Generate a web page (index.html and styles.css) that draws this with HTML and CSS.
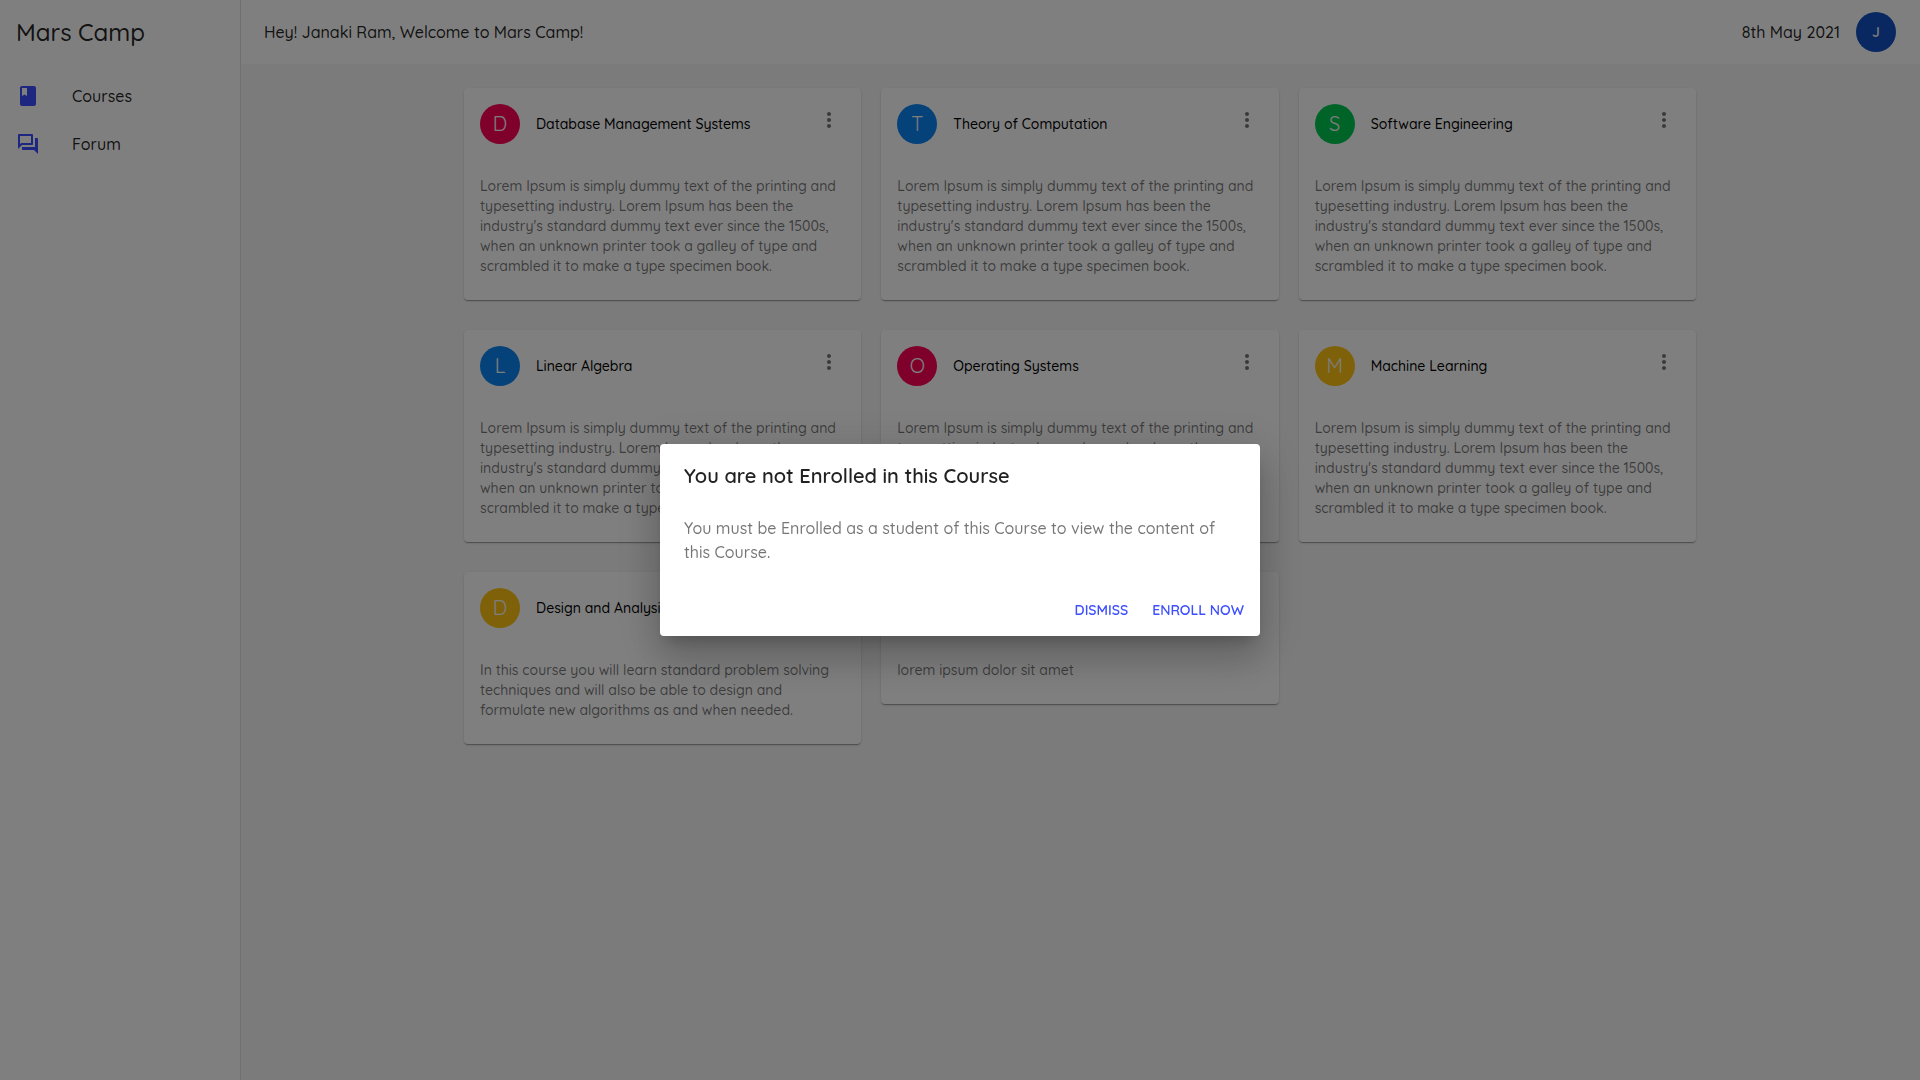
FILE: index.html
```html
<!DOCTYPE html>
<html lang="en">
<head>
<meta charset="utf-8">
<meta name="viewport" content="width=device-width, initial-scale=1">
<title>Mars Camp</title>
<link rel="stylesheet" href="styles.css">
</head>
<body>
<svg class="sprite" aria-hidden="true">
  <symbol id="icon-more" viewBox="0 0 24 24"><path d="M12 8c1.1 0 2-.9 2-2s-.9-2-2-2-2 .9-2 2 .9 2 2 2zm0 2c-1.1 0-2 .9-2 2s.9 2 2 2 2-.9 2-2-.9-2-2-2zm0 6c-1.1 0-2 .9-2 2s.9 2 2 2 2-.9 2-2-.9-2-2-2z"/></symbol>
</svg>

<div class="app">
  <aside class="sidebar">
    <h1 class="brand">Mars Camp</h1>
    <nav class="nav">
      <a class="nav-item" href="#courses">
        <svg class="nav-icon" viewBox="0 0 24 24" aria-hidden="true"><path d="M18 2H6c-1.100 0-2 .9-2 2v16c0 1.100.9 2 2 2h12c1.100 0 2-.9 2-2V4c0-1.100-.9-2-2-2zM6 4h5v8l-2.500-1.500L6 12V4z"/></svg>
        <span>Courses</span>
      </a>
      <a class="nav-item" href="#forum">
        <svg class="nav-icon" viewBox="0 0 24 24" aria-hidden="true"><path d="M15 4v7H5.170L4 12.170V4h11m1-2H3c-.55 0-1 .45-1 1v14l4-4h10c.55 0 1-.45 1-1V3c0-.55-.45-1-1-1zm5 4h-2v9H6v2c0 .55.45 1 1 1h11l4 4V7c0-.55-.45-1-1-1z"/></svg>
        <span>Forum</span>
      </a>
    </nav>
  </aside>

  <div class="page">
    <header class="topbar">
      <p class="greeting">Hey! Janaki Ram, Welcome to Mars Camp!</p>
      <time class="date" datetime="2021-05-08">8th May 2021</time>
      <span class="avatar avatar-user">J</span>
    </header>

    <main class="courses" id="courses">
      <article class="card">
        <header class="card-head">
          <span class="avatar pink">D</span>
          <h2 class="card-title">Database Management Systems</h2>
          <button class="icon-button" type="button" aria-label="Course options"><svg viewBox="0 0 24 24"><use href="#icon-more"/></svg></button>
        </header>
        <p class="card-text">Lorem Ipsum is simply dummy text of the printing and typesetting industry. Lorem Ipsum has been the industry's standard dummy text ever since the 1500s, when an unknown printer took a galley of type and scrambled it to make a type specimen book.</p>
      </article>
      <article class="card">
        <header class="card-head">
          <span class="avatar blue">T</span>
          <h2 class="card-title">Theory of Computation</h2>
          <button class="icon-button" type="button" aria-label="Course options"><svg viewBox="0 0 24 24"><use href="#icon-more"/></svg></button>
        </header>
        <p class="card-text">Lorem Ipsum is simply dummy text of the printing and typesetting industry. Lorem Ipsum has been the industry's standard dummy text ever since the 1500s, when an unknown printer took a galley of type and scrambled it to make a type specimen book.</p>
      </article>
      <article class="card">
        <header class="card-head">
          <span class="avatar green">S</span>
          <h2 class="card-title">Software Engineering</h2>
          <button class="icon-button" type="button" aria-label="Course options"><svg viewBox="0 0 24 24"><use href="#icon-more"/></svg></button>
        </header>
        <p class="card-text">Lorem Ipsum is simply dummy text of the printing and typesetting industry. Lorem Ipsum has been the industry's standard dummy text ever since the 1500s, when an unknown printer took a galley of type and scrambled it to make a type specimen book.</p>
      </article>
      <article class="card">
        <header class="card-head">
          <span class="avatar blue">L</span>
          <h2 class="card-title">Linear Algebra</h2>
          <button class="icon-button" type="button" aria-label="Course options"><svg viewBox="0 0 24 24"><use href="#icon-more"/></svg></button>
        </header>
        <p class="card-text">Lorem Ipsum is simply dummy text of the printing and typesetting industry. Lorem Ipsum has been the industry's standard dummy text ever since the 1500s, when an unknown printer took a galley of type and scrambled it to make a type specimen book.</p>
      </article>
      <article class="card">
        <header class="card-head">
          <span class="avatar pink">O</span>
          <h2 class="card-title">Operating Systems</h2>
          <button class="icon-button" type="button" aria-label="Course options"><svg viewBox="0 0 24 24"><use href="#icon-more"/></svg></button>
        </header>
        <p class="card-text">Lorem Ipsum is simply dummy text of the printing and typesetting industry. Lorem Ipsum has been the industry's standard dummy text ever since the 1500s, when an unknown printer took a galley of type and scrambled it to make a type specimen book.</p>
      </article>
      <article class="card">
        <header class="card-head">
          <span class="avatar yellow">M</span>
          <h2 class="card-title">Machine Learning</h2>
          <button class="icon-button" type="button" aria-label="Course options"><svg viewBox="0 0 24 24"><use href="#icon-more"/></svg></button>
        </header>
        <p class="card-text">Lorem Ipsum is simply dummy text of the printing and typesetting industry. Lorem Ipsum has been the industry's standard dummy text ever since the 1500s, when an unknown printer took a galley of type and scrambled it to make a type specimen book.</p>
      </article>
      <article class="card">
        <header class="card-head">
          <span class="avatar yellow">D</span>
          <h2 class="card-title">Design and Analysis</h2>
          <button class="icon-button" type="button" aria-label="Course options"><svg viewBox="0 0 24 24"><use href="#icon-more"/></svg></button>
        </header>
        <p class="card-text">In this course you will learn standard problem solving techniques and will also be able to design and formulate new algorithms as and when needed.</p>
      </article>
      <article class="card">
        <header class="card-head"></header>
        <p class="card-text">lorem ipsum dolor sit amet</p>
      </article>
    </main>
  </div>
</div>

<div class="backdrop">
  <section class="dialog" role="dialog" aria-modal="true" aria-labelledby="dialog-title">
    <h2 class="dialog-title" id="dialog-title">You are not Enrolled in this Course</h2>
    <p class="dialog-text">You must be Enrolled as a student of this Course to view the content of this Course.</p>
    <div class="dialog-actions">
      <button class="text-button" type="button">DISMISS</button>
      <button class="text-button" type="button">ENROLL NOW</button>
    </div>
  </section>
</div>
</body>
</html>
```
FILE: styles.css
```css
* {
  box-sizing: border-box;
}

body {
  margin: 0;
  background: #f7f7f7;
  color: rgba(0, 0, 0, 0.87);
  font-family: Quicksand, "Open Sans", sans-serif;
  font-size: 16px;
  font-weight: 500;
  line-height: 24px;
}

h1, h2, p {
  margin: 0;
  font-weight: 500;
}

button {
  border: 0;
  background: none;
  font-family: inherit;
  cursor: pointer;
}

.sprite {
  display: none;
}

.app {
  display: grid;
  grid-template-columns: 240px 1fr;
  min-height: 100vh;
}

/* Sidebar: its right border lies over the page's edge */
.sidebar {
  z-index: 1;
  width: 241px;
  background: #fff;
  border-right: 1px solid rgba(0, 0, 0, 0.12);
}

.brand {
  padding: 16px;
  font-size: 24px;
  line-height: 32px;
}

.nav {
  padding: 8px 0;
}

.nav-item {
  display: flex;
  align-items: center;
  gap: 32px;
  height: 48px;
  padding: 0 16px;
  color: inherit;
  text-decoration: none;
}

.nav-icon {
  width: 24px;
  height: 24px;
  fill: #3d4fff;
}

/* Top bar */
.topbar {
  display: flex;
  align-items: center;
  gap: 16px;
  height: 64px;
  padding: 0 24px;
  background: #fff;
}

.greeting {
  flex: 1;
}

.avatar {
  display: flex;
  align-items: center;
  justify-content: center;
  flex: none;
  width: 40px;
  height: 40px;
  border-radius: 50%;
  color: #fafafa;
  font-size: 20px;
  font-weight: 400;
}

.avatar-user {
  background: #1250c4;
  font-size: 14px;
  font-weight: 600;
}

.pink { background: #ff0055; }
.blue { background: #0984f3; }
.green { background: #00c853; }
.yellow { background: #ffc312; }

/* Course cards */
.courses {
  display: grid;
  grid-template-columns: repeat(3, 1fr);
  align-items: start;
  gap: 30px 20px;
  max-width: 1280px;
  margin: 0 auto;
  padding: 24px;
}

.card {
  border-radius: 4px;
  background: #fff;
  box-shadow: 0 2px 1px -1px rgba(0, 0, 0, 0.2), 0 1px 1px rgba(0, 0, 0, 0.14), 0 1px 3px rgba(0, 0, 0, 0.12);
}

.card-head {
  display: flex;
  align-items: center;
  gap: 16px;
  height: 72px;
  padding: 16px;
}

.card-title {
  flex: 1;
  color: #000;
  font-size: 14px;
  line-height: 20px;
}

.icon-button {
  align-self: flex-start;
  width: 48px;
  height: 48px;
  margin: -8px;
  padding: 12px;
  fill: rgba(0, 0, 0, 0.54);
}

.icon-button svg {
  display: block;
}

.card-text {
  padding: 16px 16px 24px;
  color: rgba(0, 0, 0, 0.54);
  font-size: 14px;
  line-height: 20px;
}

/* Dialog */
.backdrop {
  position: fixed;
  z-index: 2;
  inset: 0;
  display: flex;
  align-items: center;
  justify-content: center;
  background: rgba(0, 0, 0, 0.5);
}

.dialog {
  width: 100%;
  max-width: 600px;
  margin: 32px;
  border-radius: 4px;
  background: #fff;
  box-shadow: 0 11px 15px -7px rgba(0, 0, 0, 0.2), 0 24px 38px 3px rgba(0, 0, 0, 0.14), 0 9px 46px 8px rgba(0, 0, 0, 0.12);
}

.dialog-title {
  padding: 16px 24px;
  font-size: 20px;
  font-weight: 600;
  line-height: 32px;
}

.dialog-text {
  padding: 8px 24px 20px;
  color: rgba(0, 0, 0, 0.54);
}

.dialog-actions {
  display: flex;
  justify-content: flex-end;
  gap: 8px;
  padding: 8px;
}

.text-button {
  min-width: 64px;
  padding: 6px 8px;
  border-radius: 4px;
  color: #3d4fff;
  font-size: 14px;
  font-weight: 600;
  line-height: 24px;
}
```
